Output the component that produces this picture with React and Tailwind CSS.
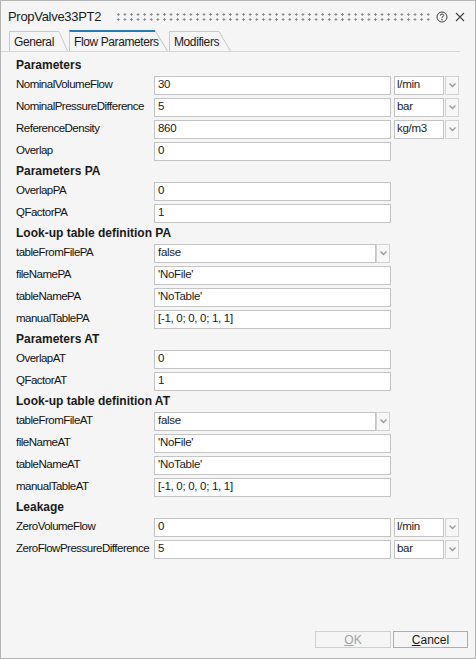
import React from "react";

const rows = [
  { type: "header", label: "Parameters" },
  { label: "NominalVolumeFlow", value: "30", unit: "l/min" },
  { label: "NominalPressureDifference", value: "5", unit: "bar" },
  { label: "ReferenceDensity", value: "860", unit: "kg/m3" },
  { label: "Overlap", value: "0" },
  { type: "header", label: "Parameters PA" },
  { label: "OverlapPA", value: "0" },
  { label: "QFactorPA", value: "1" },
  { type: "header", label: "Look-up table definition PA" },
  { label: "tableFromFilePA", value: "false", combo: true },
  { label: "fileNamePA", value: "'NoFile'" },
  { label: "tableNamePA", value: "'NoTable'" },
  { label: "manualTablePA", value: "[-1, 0; 0, 0; 1, 1]" },
  { type: "header", label: "Parameters AT" },
  { label: "OverlapAT", value: "0" },
  { label: "QFactorAT", value: "1" },
  { type: "header", label: "Look-up table definition AT" },
  { label: "tableFromFileAT", value: "false", combo: true },
  { label: "fileNameAT", value: "'NoFile'" },
  { label: "tableNameAT", value: "'NoTable'" },
  { label: "manualTableAT", value: "[-1, 0; 0, 0; 1, 1]" },
  { type: "header", label: "Leakage" },
  { label: "ZeroVolumeFlow", value: "0", unit: "l/min" },
  { label: "ZeroFlowPressureDifference", value: "5", unit: "bar" }
];

function Chevron() {
  return (
    <svg width="7" height="5" viewBox="0 0 7 5">
      <path d="M0.5 0.5 L3.5 3.5 L6.5 0.5" fill="none" stroke="#9a9a9a" strokeWidth="1.3" />
    </svg>
  );
}

function DropBtn() {
  return (
    <div className="w-[14px] h-[19px] border border-[#d2d2d2] bg-[#f7f7f7] flex items-center justify-center">
      <Chevron />
    </div>
  );
}

function Tab({ label, active, boxClass, slant }) {
  return (
    <div className={["flex items-end", active ? "h-[21px]" : "h-[20px]"].join(" ")}>
      <div
        className={[
          "h-full border-l border-[#c9c9c9] flex items-center pl-[4px] text-[12px] tracking-[-0.4px] whitespace-nowrap text-[#1a1a1a]",
          active ? "border-t-2 border-t-[#2b7bb3] bg-[#f5f5f5]" : "border-t",
          boxClass
        ].join(" ")}
      >
        {label}
      </div>
      <svg width={slant} height="20" viewBox={`0 0 ${slant} 20`} preserveAspectRatio="none" className="block h-full">
        <path d={`M0 0.5 L${slant - 0.5} 20`} stroke="#c9c9c9" fill="none" />
      </svg>
    </div>
  );
}

export default function App() {
  return (
    <div className="w-[476px] h-[659px] bg-[#f5f5f5] border border-[#b4b4b4] flex flex-col font-['Liberation_Sans',Arial,sans-serif] text-[#1a1a1a]">
      {/* title bar */}
      <div className="h-[30px] flex items-center pl-[7px] pr-[10px] pt-[2px]">
        <span className="text-[13px] tracking-[-0.3px]">PropValve33PT2</span>
        <div className="flex-1 ml-[14px] mr-[6px] h-[10px] bg-[radial-gradient(circle,#8c8c8c_1.1px,transparent_1.3px)] bg-[length:6.6px_5px]" />
        <svg width="12" height="12" viewBox="0 0 12 12" className="mr-[7px]">
          <circle cx="6" cy="6" r="5" fill="none" stroke="#444" strokeWidth="1" />
          <path d="M4.3 4.7 Q4.3 3 6 3 Q7.7 3 7.7 4.5 Q7.7 5.4 6 6.2 L6 7.2" fill="none" stroke="#444" strokeWidth="1" />
          <circle cx="6" cy="8.8" r="0.7" fill="#444" />
        </svg>
        <svg width="10" height="10" viewBox="0 0 10 10">
          <path d="M1 1 L9 9 M9 1 L1 9" stroke="#444" strokeWidth="1.1" />
        </svg>
      </div>

      {/* tabs */}
      <div className="h-[21px] flex items-end pl-[8px] mr-[15px] border-b border-[#d6d6d6]">
        <Tab label="General" boxClass="w-[50px]" slant={9} />
        <div className="w-[1px]" />
        <Tab label="Flow Parameters" active boxClass="w-[86px]" slant={13} />
        <div className="w-[1px]" />
        <Tab label="Modifiers" boxClass="w-[50px]" slant={12} />
      </div>

      {/* content */}
      <div className="pt-[4px] pl-[15px] flex flex-col">
        {rows.map((r, i) =>
          r.type === "header" ? (
            <div key={i} className="h-[18px] flex items-center font-bold text-[12px]">
              {r.label}
            </div>
          ) : (
            <div key={i} className="h-[22px] flex items-center">
              <div className="w-[138px] text-[11.5px] tracking-[-0.5px] whitespace-nowrap text-[#111]">{r.label}</div>
              {r.combo ? (
                <div className="flex items-center">
                  <div className="w-[222px] h-[19px] bg-white border border-[#c4c4c4] pl-[3px] flex items-center text-[11.5px] tracking-[-0.3px]">
                    {r.value}
                  </div>
                  <DropBtn />
                </div>
              ) : (
                <div className="w-[237px] h-[19px] bg-white border border-[#c4c4c4] pl-[3px] flex items-center text-[11.5px] tracking-[-0.3px]">
                  {r.value}
                </div>
              )}
              {r.unit ? (
                <div className="flex items-center ml-[3px] gap-[1px]">
                  <div className="w-[50px] h-[19px] bg-white border border-[#c4c4c4] pl-[2px] flex items-center text-[11.5px] tracking-[-0.3px]">
                    {r.unit}
                  </div>
                  <DropBtn />
                </div>
              ) : null}
            </div>
          )
        )}
      </div>

      <div className="flex-1" />

      {/* buttons */}
      <div className="flex justify-end gap-[2px] pr-[7px] pb-[10px]">
        <button
          type="button"
          disabled
          className="w-[76px] h-[17px] border border-[#cfcfcf] bg-[#f5f5f5] text-[12px] text-[#a2a2a2] flex items-center justify-center"
        >
          <span className="underline">O</span>K
        </button>
        <button
          type="button"
          className="w-[75px] h-[17px] border border-[#adadad] bg-[#f5f5f5] text-[12px] text-[#1a1a1a] flex items-center justify-center"
        >
          <span className="underline">C</span>ancel
        </button>
      </div>
    </div>
  );
}
